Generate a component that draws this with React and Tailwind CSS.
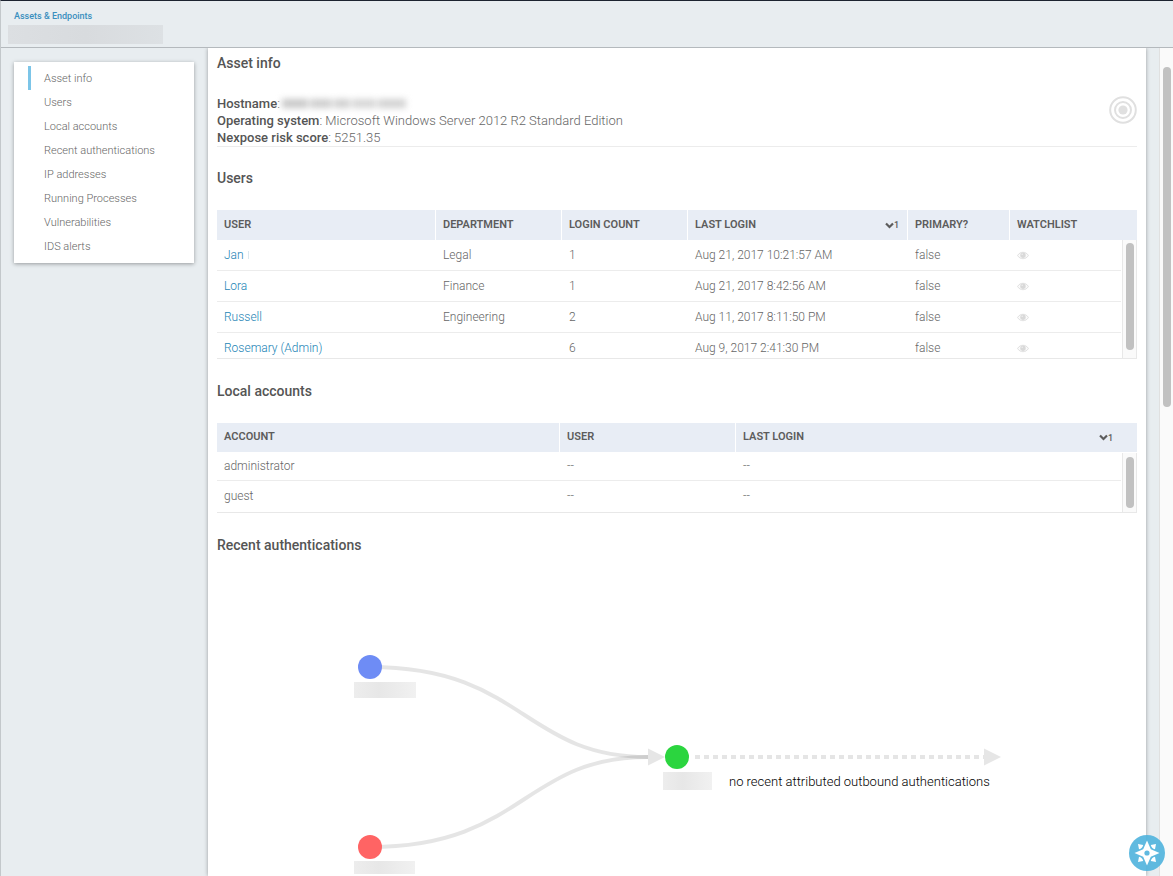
// App.jsx
import React, { useState } from 'react'

const sections = [
  'Asset info',
  'Users',
  'Local accounts',
  'Recent authentications',
  'IP addresses',
  'Running Processes',
  'Vulnerabilities',
  'IDS alerts',
]

const users = [
  { name: 'Jan', department: 'Legal', count: 1, lastLogin: 'Aug 21, 2017 10:21:57 AM', primary: 'false', cut: true },
  { name: 'Lora', department: 'Finance', count: 1, lastLogin: 'Aug 21, 2017 8:42:56 AM', primary: 'false' },
  { name: 'Russell', department: 'Engineering', count: 2, lastLogin: 'Aug 11, 2017 8:11:50 PM', primary: 'false' },
  { name: 'Rosemary (Admin)', department: '', count: 6, lastLogin: 'Aug 9, 2017 2:41:30 PM', primary: 'false' },
]

const accounts = ['administrator', 'guest']

function SectionTitle({ children }) {
  return <h2 className="py-[22px] text-sm leading-5 font-medium text-[#555]">{children}</h2>
}

function HeadCell({ children, last, sorted }) {
  return (
    <th className={`bg-[#e8edf5] px-[7px] text-left text-[11px] font-semibold text-[#5c5c5c] ${last ? '' : 'border-r border-white'}`}>
      <div className="flex items-center justify-between">
        <span>{children}</span>
        {sorted}
      </div>
    </th>
  )
}

function SortMark({ label }) {
  return (
    <button aria-label={label} className="flex items-center pr-px text-[9px] leading-3 font-medium text-[#5c5c5c]">
      <svg width="9" height="7" viewBox="0 0 9 7" fill="none" stroke="currentColor" strokeWidth="2.200">
        <path d="M1 1.5 L4.5 5 L8 1.5" />
      </svg>
      <span>1</span>
    </button>
  )
}

function Eye() {
  return (
    <svg width="12" height="9" viewBox="0 0 12 9" className="block">
      <path d="M0.600 4.500 C3 0.200 9 0.200 11.400 4.500 C9 8.800 3 8.800 0.600 4.500 Z" fill="#fafafa" stroke="#dcdcdc" strokeWidth="0.9" />
      <circle cx="6" cy="4.200" r="2.700" fill="#d9d9d9" />
      <circle cx="5.200" cy="3.300" r="0.7" fill="#f2f2f2" />
    </svg>
  )
}

function TableScroll({ children }) {
  return (
    <div className="absolute top-[30px] right-0 bottom-0 flex w-4 justify-end bg-white pl-px">
      <div className="w-[15px] border-x border-[#e8e8e8] bg-[#fafafa] pr-[2px] pl-[3px]">{children}</div>
    </div>
  )
}

function Compass() {
  return (
    <svg width="36" height="36" viewBox="0 0 36 36">
      <circle cx="18" cy="18" r="18" fill="#4fb3dd" fillOpacity="0.9" />
      <g fill="#fff">
        <path d="M18 5.500 L21.800 14.200 L30.500 18 L21.800 21.800 L18 30.500 L14.200 21.800 L5.500 18 L14.200 14.200 Z" />
        <path d="M9 9 L14.200 10 Q13.500 13.500 10 14.200 Z M27 9 L21.800 10 Q22.500 13.500 26 14.200 Z M9 27 L14.200 26 Q13.500 22.500 10 21.800 Z M27 27 L21.800 26 Q22.500 22.500 26 21.800 Z" />
      </g>
      <circle cx="18" cy="18" r="2.600" fill="#5fb9e0" />
    </svg>
  )
}

function AuthGraph() {
  return (
    <svg viewBox="0 10 920 300" className="block w-full" role="img" aria-label="Recent authentications">
      <defs>
        <linearGradient id="veil">
          <stop offset="0" stopColor="#ededed" />
          <stop offset="0.4" stopColor="#e7e7e7" />
          <stop offset="1" stopColor="#f1f1f1" />
        </linearGradient>
      </defs>
      <g fill="none" stroke="#000" strokeOpacity="0.1" strokeWidth="4">
        <path d="M153 100 C 306.500 100 306.500 190 431 190" />
        <path d="M153 280 C 306.500 280 306.500 190 431 190" />
        <path d="M478 190 H767" strokeDasharray="5 4" />
      </g>
      <g fill="#e6e6e6">
        <path d="M431 181.500 L448 190 L431 198.500 Z" />
        <path d="M767 181.500 L784 190 L767 198.500 Z" />
      </g>
      <circle cx="153" cy="100" r="12" fill="#6e8cf5" />
      <circle cx="153" cy="280" r="12" fill="#ff6464" />
      <circle cx="460" cy="190" r="12" fill="#2bd53f" />
      <g fill="url(#veil)">
        <rect x="137" y="115" width="62" height="16" />
        <rect x="137" y="294" width="61" height="13" />
        <rect x="446" y="205" width="49" height="18" />
      </g>
      <text x="512" y="219" fontSize="13" fontWeight="300" fill="#000">
        no recent attributed outbound authentications
      </text>
    </svg>
  )
}

function App() {
  const [active, setActive] = useState('Asset info')

  return (
    <div className="relative flex h-screen flex-col overflow-hidden border-t border-l border-t-[#1c2330] border-l-[#c3c8cb] bg-[#e8edf0] font-[Roboto,sans-serif]">
      <header className="relative z-10 h-[47px] shrink-0 border-b border-[#b4b9bd] bg-[#e8edf0] px-[7px] pt-2">
        <a href="#assets" className="block pl-[6px] text-[9px] leading-[14px] font-medium text-[#3a8fbe]">
          Assets &amp; Endpoints
        </a>
        <div className="mt-[2px] h-[19px] w-[155px] bg-linear-to-r from-[#dcdfe2] via-[#d8dbde] to-[#dde1e4]" />
      </header>

      <div className="flex min-h-0 flex-1">
        <aside className="w-[207px] shrink-0 pt-[14px] pr-[14px] pl-[13px]">
          <nav className="bg-white pt-1 pb-[5px] shadow-[0_1px_4px_rgba(0,0,0,0.35)]">
            {sections.map((name) => (
              <button
                key={name}
                onClick={() => setActive(name)}
                className="flex h-6 w-full items-start pl-[14px] text-left text-[11px] leading-[26px] font-light text-[#666]"
              >
                <span className={`mr-[13px] h-6 w-[3px] ${active === name ? 'bg-[#7cc5e8]' : ''}`} />
                {name}
              </button>
            ))}
          </nav>
        </aside>

        <main className="min-w-0 flex-1 overflow-hidden bg-white px-[9px] pt-[5px] shadow-[0_0_4px_rgba(0,0,0,0.35)]">
          <h2 className="pb-[22px] text-sm leading-5 font-medium text-[#555]">Asset info</h2>
          <div className="-mb-px flex items-start justify-between border-b border-[#ececec] text-[13px] leading-[17px] font-light text-[#666]">
            <div>
              <div className="flex items-center">
                <span><b className="font-medium text-[#555]">Hostname</b>:</span>
                <span className="ml-[2px] flex h-[9px] gap-[2px] blur-[3px]">
                  <i className="w-[26px] bg-[#c8c8c8]" />
                  <i className="w-[22px] bg-[#cecece]" />
                  <i className="w-4 bg-[#d0d0d0]" />
                  <i className="w-6 bg-[#d6d6d6]" />
                  <i className="w-7 bg-[#d2d2d2]" />
                </span>
              </div>
              <div><b className="font-medium text-[#555]">Operating system</b>: Microsoft Windows Server 2012 R2 Standard Edition</div>
              <div><b className="font-medium text-[#555]">Nexpose risk score</b>: 5251.35</div>
            </div>
            <svg width="28" height="28" viewBox="0 0 28 28" className="mt-px" fill="none" stroke="#e0e0e0" strokeWidth="2">
              <circle cx="14" cy="14" r="12.800" />
              <circle cx="14" cy="14" r="8" />
              <circle cx="14" cy="14" r="4.600" fill="#e0e0e0" stroke="none" />
            </svg>
          </div>

          <SectionTitle>Users</SectionTitle>
          <div className="relative h-[149px] overflow-hidden border-b border-[#e8e8e8]">
            <table className="w-full table-fixed border-separate border-spacing-0">
              <colgroup>
                <col className="w-[219px]" />
                <col className="w-[126px]" />
                <col className="w-[126px]" />
                <col className="w-[220px]" />
                <col className="w-[102px]" />
                <col />
              </colgroup>
              <thead>
                <tr className="h-[30px]">
                  <HeadCell>USER</HeadCell>
                  <HeadCell>DEPARTMENT</HeadCell>
                  <HeadCell>LOGIN COUNT</HeadCell>
                  <HeadCell sorted={<SortMark label="Sort users by last login" />}>LAST LOGIN</HeadCell>
                  <HeadCell>PRIMARY?</HeadCell>
                  <HeadCell last>WATCHLIST</HeadCell>
                </tr>
              </thead>
              <tbody className="text-xs font-light text-[#666]">
                {users.map((user) => (
                  <tr key={user.name} className="h-[31px] *:border-b *:border-[#ececec] *:px-[7px]">
                    <td>
                      <a href="#user" className="text-[#2384b5]">{user.name}</a>
                      {user.cut && <span className="ml-1 inline-block h-2 w-px bg-[#dce8ef]" />}
                    </td>
                    <td>{user.department}</td>
                    <td>{user.count}</td>
                    <td>{user.lastLogin}</td>
                    <td>{user.primary}</td>
                    <td>
                      <button aria-label={`Watch ${user.name}`} className="block"><Eye /></button>
                    </td>
                  </tr>
                ))}
              </tbody>
            </table>
            <TableScroll>
              <div className="mt-[3px] h-[107px] rounded-full bg-[#c1c1c1]" />
            </TableScroll>
          </div>

          <SectionTitle>Local accounts</SectionTitle>
          <div className="relative h-[90px] overflow-hidden border-b border-[#e8e8e8]">
            <table className="w-full table-fixed border-separate border-spacing-0">
              <colgroup>
                <col className="w-[343px]" />
                <col className="w-[176px]" />
                <col />
              </colgroup>
              <thead>
                <tr className="h-[29px]">
                  <HeadCell>ACCOUNT</HeadCell>
                  <HeadCell>USER</HeadCell>
                  <HeadCell last sorted={<span className="mr-4"><SortMark label="Sort accounts by last login" /></span>}>LAST LOGIN</HeadCell>
                </tr>
              </thead>
              <tbody className="text-xs font-light text-[#666]">
                {accounts.map((account) => (
                  <tr key={account} className="h-[31px] *:border-b *:border-[#ececec] *:px-[7px] first:h-[29px] last:*:border-transparent">
                    <td>{account}</td>
                    <td>--</td>
                    <td>--</td>
                  </tr>
                ))}
              </tbody>
            </table>
            <TableScroll>
              <div className="mt-1 h-[51px] rounded-full bg-[#c1c1c1]" />
            </TableScroll>
          </div>

          <SectionTitle>Recent authentications</SectionTitle>
          <AuthGraph />
        </main>

        <div className="flex w-[27px] shrink-0 justify-end">
          <div className="w-[14px] border-l border-[#e0e0e0] bg-[#fafafa] pt-[19px] pr-[2px] pl-[3px]">
            <div className="h-[340px] rounded-full bg-[#c1c1c1]" />
          </div>
        </div>
      </div>

      <button aria-label="Open guide" className="absolute right-2 bottom-[5px] z-20 size-9 rounded-full">
        <Compass />
      </button>
    </div>
  )
}

export default App
